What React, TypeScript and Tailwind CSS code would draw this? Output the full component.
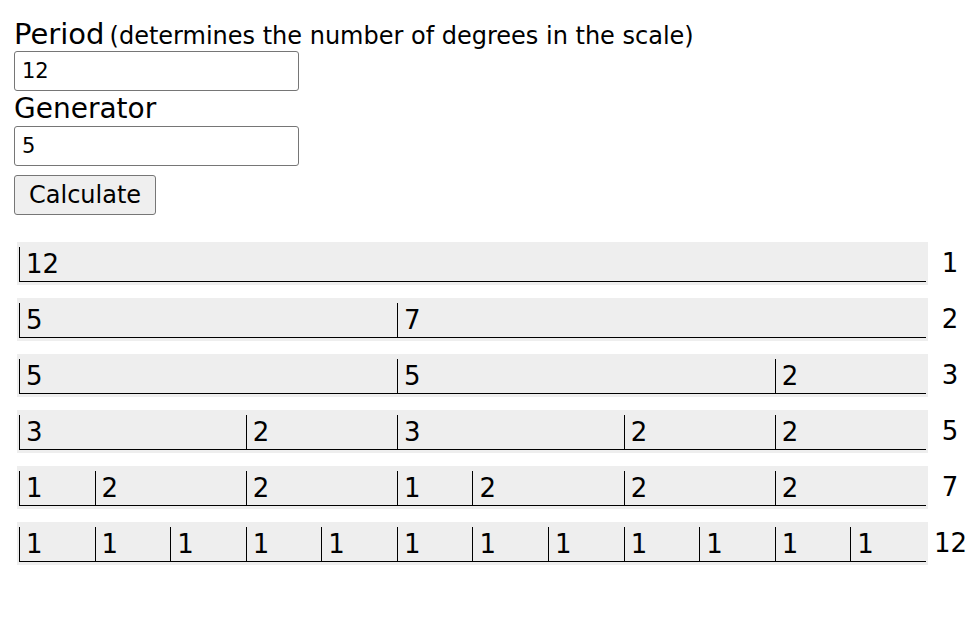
import { useState } from 'react';

// steps for each moment of symmetry: keep a level when its step sizes change
function buildScales(period: number, generator: number): number[][] {
  const out: number[][] = [];
  let lastKey = '';
  for (let n = 1; n <= period; n++) {
    const pts = [0];
    for (let i = 1; i < n; i++) pts.push((generator * i) % period);
    pts.sort((a, b) => a - b);
    const steps = pts.map((p, i) => (i + 1 < pts.length ? pts[i + 1] : period) - p);
    const sizes = Array.from(new Set(steps)).sort((a, b) => a - b);
    if (sizes.length > 2) continue;
    const key = sizes.join(',');
    if (key === lastKey) continue;
    lastKey = key;
    out.push(steps);
  }
  return out;
}

export default function App() {
  const [period, setPeriod] = useState('12');
  const [generator, setGenerator] = useState('5');
  const [scale, setScale] = useState(() => ({ period: 12, rows: buildScales(12, 5) }));

  const calculate = () => {
    const p = parseInt(period) || 12;
    setScale({ period: p, rows: buildScales(p, parseInt(generator) || 5) });
  };

  return (
    <div className="min-h-[622px] bg-white pl-[14px] pt-[14px] text-black" style={{ fontFamily: '"DejaVu Sans", sans-serif' }}>
      <div className="h-[37px] whitespace-nowrap pt-[3px] leading-[34px]">
        <span className="text-[29px]">Period</span>{' '}
        <span className="text-[24px]">(determines the number of degrees in the scale)</span>
      </div>
      <input
        value={period}
        onChange={(e) => setPeriod(e.target.value)}
        className="block h-[40px] w-[285px] rounded-[3px] border border-[#767676] px-[7px] text-[21px]"
      />
      <div className="h-[35px] text-[28px] leading-[35px]">Generator</div>
      <input
        value={generator}
        onChange={(e) => setGenerator(e.target.value)}
        className="block h-[40px] w-[285px] rounded-[3px] border border-[#767676] px-[7px] text-[21px]"
      />
      <button
        onClick={calculate}
        className="mt-[9px] h-[40px] rounded-[3px] border border-[#767676] bg-[#efefef] px-[14px] text-[24px]"
      >
        Calculate
      </button>

      <div className="ml-[3px] mt-[27px] flex flex-col gap-[13px]">
        {scale.rows.map((steps, r) => (
          <div key={r} className="flex items-center">
            <div className="w-[911px] shrink-0 bg-[#eeeeee] px-[2px] pb-[3px] pt-[5px]">
              <div className="flex border-b border-black">
                {steps.map((s, i) => (
                  <div
                    key={i}
                    className="h-[34px] shrink-0 overflow-hidden border-l border-black pl-[6px] text-[26px] leading-[34px]"
                    style={{ width: `${(s / scale.period) * 100}%` }}
                  >
                    {s}
                  </div>
                ))}
              </div>
            </div>
            <div className="w-[38px] shrink-0 pl-[6px] text-center text-[26px]">{steps.length}</div>
          </div>
        ))}
      </div>
    </div>
  );
}
